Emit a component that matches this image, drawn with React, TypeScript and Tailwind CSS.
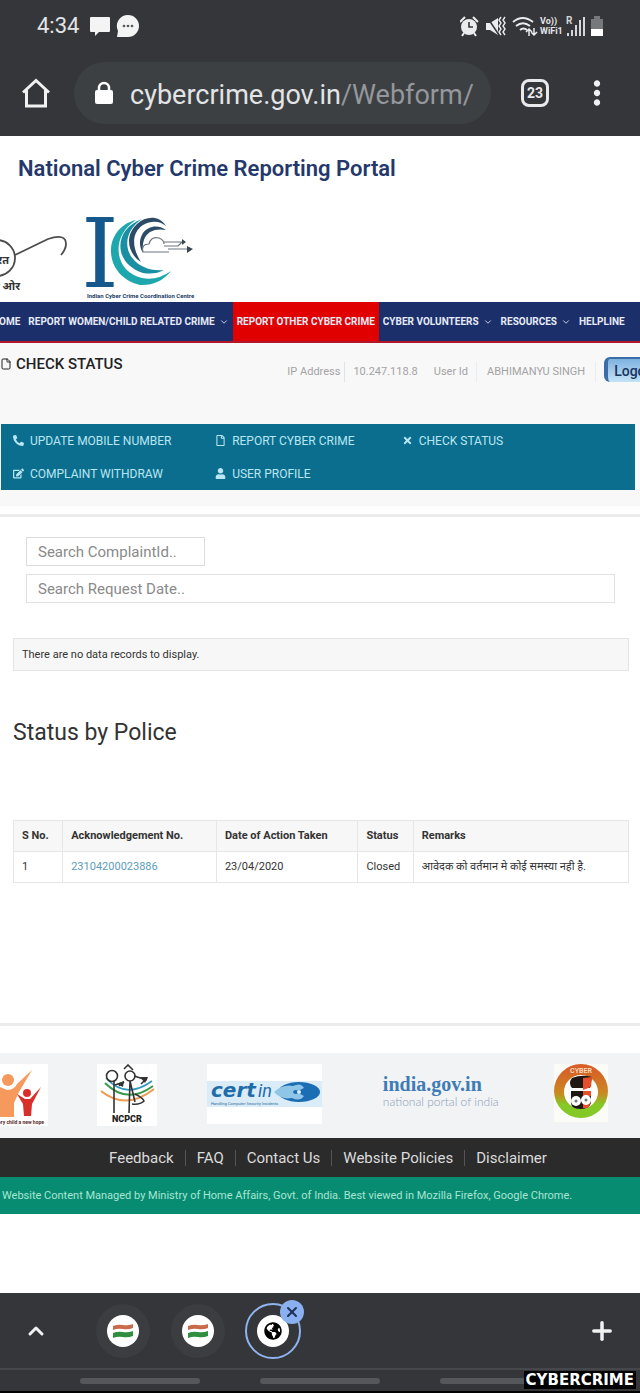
import { useState } from 'react';
import clsx from 'clsx';
import { ChevronDown, ChevronUp, File, Plus, X } from 'lucide-react';
import { FaEdit, FaGlobeAmericas, FaPhoneAlt, FaRegFile, FaTimes, FaUser } from 'react-icons/fa';
import { MdMoreVert } from 'react-icons/md';

const NAV_ITEMS = [
  { label: 'HOME' },
  { label: 'REPORT WOMEN/CHILD RELATED CRIME', menu: true },
  { label: 'REPORT OTHER CYBER CRIME', active: true },
  { label: 'CYBER VOLUNTEERS', menu: true },
  { label: 'RESOURCES', menu: true },
  { label: 'HELPLINE' },
];

const ACTIONS = [
  { label: 'UPDATE MOBILE NUMBER', icon: FaPhoneAlt },
  { label: 'REPORT CYBER CRIME', icon: FaRegFile },
  { label: 'CHECK STATUS', icon: FaTimes },
  { label: 'COMPLAINT WITHDRAW', icon: FaEdit },
  { label: 'USER PROFILE', icon: FaUser },
];

const RECORDS = [
  {
    sno: 1,
    ack: '23104200023886',
    date: '23/04/2020',
    status: 'Closed',
    remarks: 'आवेदक को वर्तमान मे कोई समस्या नही है.',
  },
];

const FOOTER_LINKS = ['Feedback', 'FAQ', 'Contact Us', 'Website Policies', 'Disclaimer'];

function StatusBar() {
  return (
    <div className="flex h-[52px] items-center pl-[37px] pr-9 text-[#e4e5e7]">
      <span className="text-[22px] leading-6">4:34</span>
      <svg className="ml-2.5 h-6 w-[50px]" viewBox="0 0 50 24" fill="#f4f4f5">
        <path d="M2 3h18a1 1 0 0 1 1 1v13a1 1 0 0 1-1 1H10l-4 4v-4H2a1 1 0 0 1-1-1V4a1 1 0 0 1 1-1z" />
        <path d="M39 1a11 11 0 1 1 0 22H28l1-6A11 11 0 0 1 39 1z" />
        <g fill="#55565a">
          <circle cx="35" cy="12" r="1.3" />
          <circle cx="39" cy="12" r="1.3" />
          <circle cx="43" cy="12" r="1.3" />
        </g>
      </svg>
      <div className="ml-auto flex items-center">
        {/* Alarm, vibrate and wifi */}
        <svg className="h-6 w-[80px]" viewBox="0 0 80 24" fill="none" stroke="#ececee" strokeWidth="2">
          <circle cx="9" cy="13" r="8" fill="#ececee" stroke="none" />
          <path d="M0 8l5-5M18 8l-5-5M4 19l-2 3M14 19l2 3" />
          <path d="M9 8v5h4" stroke="#35363a" strokeWidth="1.6" />
          <path d="M26 9h4l8-5v17l-8-5h-4z" fill="#ececee" stroke="none" />
          <path d="M27 3l12 18" stroke="#35363a" strokeWidth="1.5" />
          <path d="M41 3l-2 3 2 3-2 3 2 3-2 3 2 3M45 3l-2 3 2 3-2 3 2 3-2 3 2 3" strokeWidth="1.4" />
          <path d="M53 8q9.5-8 20 0M56 12q7-5.5 14 0M60 16q3.5-3 7 0" strokeWidth="2" />
          <path d="M69 22v-7M74 14v7M66 18l3-3 3 3M71 18l3 3 3-3" strokeWidth="1.5" />
        </svg>
        <div className="w-6 text-[9px] font-bold leading-[10px]">
          <div>Vo))</div>
          <div>WiFi1</div>
        </div>
        <svg className="ml-0.5 h-6 w-5" viewBox="0 0 20 24" fill="#d5d6d8">
          <text x="0" y="10" fontSize="10" fontWeight="700">R</text>
          <path d="M1 19h2v3H1zM5 16h2v6H5zM9 11h2v11H9zM13 6h2v16h-2zM17 3h2v19h-2z" />
        </svg>
        <svg className="ml-1 h-6 w-[14px]" viewBox="0 0 14 24">
          <path d="M4 2h6v3h3v17H1V5h3z" fill="#77787c" />
          <path d="M1 15h12v7H1z" fill="#fff" />
        </svg>
      </div>
    </div>
  );
}

function Toolbar() {
  return (
    <div className="flex items-center pb-3 pl-[22px] pr-6 pt-2.5">
      <button aria-label="Home" className="text-[#f1f1f2]">
        <svg className="h-[30px] w-7" viewBox="0 0 28 30" fill="none" stroke="currentColor" strokeWidth="3">
          <path d="M1 14.500L14 2.500l13 12M4.500 12v16h19V12" />
        </svg>
      </button>
      <div className="ml-6 flex h-[62px] min-w-0 flex-1 items-center rounded-full bg-[#3c4043] pl-5">
        <svg className="h-6 w-5 shrink-0" viewBox="0 0 20 24">
          <path d="M5 10V7a5 5 0 0 1 10 0v3" fill="none" stroke="#fff" strokeWidth="2.5" />
          <rect x="1" y="9" width="18" height="14" rx="2" fill="#fff" />
        </svg>
        <span className="ml-4 whitespace-nowrap pt-1 text-[27px] leading-8 text-[#e3e4e6]">
          cybercrime.gov.in<span className="text-[#94979b]">/Webform/</span>
        </span>
      </div>
      <button
        aria-label="Tabs"
        className="ml-[30px] h-7 w-7 rounded-lg border-[3px] border-[#e8e9ea] text-sm font-bold leading-[22px] text-[#e8e9ea]"
      >
        23
      </button>
      <button aria-label="More" className="ml-[29px] text-[#f1f1f2]">
        <MdMoreVert className="h-[38px] w-[38px]" />
      </button>
    </div>
  );
}

function HeaderLogos() {
  return (
    <svg className="h-[102px] w-[210px]" viewBox="0 0 210 102" fill="none">
      {/* Swachh Bharat spectacles */}
      <g stroke="#4c4c4c" strokeWidth="1.8">
        <circle cx="-3" cy="58" r="18" />
        <path d="M15 55L48 39q18-6 18 5 0 5-5 11M-3 40v-5" />
      </g>
      <g fill="#333" fontSize="11" fontWeight="700" textAnchor="end">
        <text x="9" y="64">भारत</text>
        <text x="20" y="90">की ओर</text>
      </g>
      <text x="81" y="87" fontSize="96" fontFamily="DejaVu Serif" fill="#15588c">I</text>
      <path d="M136 20C102 28 102 76 140 85q19 1 31-14-14 10-29 7C114 72 110 36 136 20z" fill="#1ea8ad" />
      <path d="M142 19C112 30 114 64 143 73q12 2 21-3-12 1-20-3C122 57 122 32 142 19z" fill="#1a8fa3" />
      <path d="M166 26c-7-11-20-10-29-2-13 12-9 30 4 38-9-14-10-29 2-37 9-5 17-4 23 1z" fill="#2c4b66" />
      <path d="M166 30c-8-6-18-4-23 3-5 8-3 15 0 20-1-10 1-17 7-21 5-3 11-3 16-2z" fill="#2c4b66" />
      <g stroke="#6b7780" strokeWidth="1.2">
        <path d="M143 52q-2-8 6-8 2-8 10-6 5 2 5 6M143 52h26M164 42h20M164 46h14l4-4M168 49h22" />
      </g>
      <path d="M182 39l4 3-4 3zM187 46l6 3-6 4z" fill="#3c4850" />
      <text x="87" y="98" fontSize="6" fontWeight="700" fill="#1c3c66">Indian Cyber Crime Coordination Centre</text>
    </svg>
  );
}

function MainNav() {
  return (
    <nav className="overflow-hidden border-b-2 border-[#b3162b] bg-[#1b2f6b]">
      <ul className="-ml-3 flex">
        {NAV_ITEMS.map((item) => (
          <li key={item.label} className={clsx('shrink-0', item.active && 'bg-[#e00000]')}>
            <a
              href="#"
              className="flex h-[39px] items-center gap-1 whitespace-nowrap px-1 text-[10px] font-bold text-[#e6ebf7]"
            >
              {item.label}
              {item.menu && <ChevronDown className="h-2.5 w-2.5" />}
            </a>
          </li>
        ))}
      </ul>
    </nav>
  );
}

function PageHead() {
  return (
    <section className="overflow-hidden bg-[#f8f8f9] pb-4 pt-2.5">
      <div className="flex items-start">
        <h2 className="flex items-center gap-1 whitespace-nowrap text-[15px] font-medium leading-[22px] text-[#222]">
          <File className="h-[14px] w-3" />
          CHECK STATUS
        </h2>
        <div className="-mr-6 ml-auto mt-1 flex h-[25px] items-end whitespace-nowrap text-[11px] leading-5 text-[#a3a3a3]">
          <span className="border-r border-[#e2e2e2] pr-1">IP Address</span>
          <span className="pl-2">10.247.118.8</span>
          <span className="pl-4">User Id</span>
          <span className="ml-2 border-x border-[#ececec] px-2.5">ABHIMANYU SINGH</span>
          <button className="ml-2 h-[25px] rounded-md border-l-4 border-t-2 border-[#3b6ea8] bg-linear-to-b from-[#7fb2e0] to-[#c3e3f5] px-1.5 text-sm font-medium text-[#17355e]">
            Logout
          </button>
        </div>
      </div>
      <ul className="ml-px mr-[5px] mt-[42px] grid grid-cols-[13fr_12fr_15fr] bg-[#0b6e8f] pl-3">
        {ACTIONS.map(({ label, icon: Icon }) => (
          <li key={label}>
            <a href="#" className="flex h-[33px] items-center gap-1.5 text-xs text-[#b9e6f2]">
              <Icon className="h-[11px] w-[11px]" />
              {label}
            </a>
          </li>
        ))}
      </ul>
    </section>
  );
}

function SearchForm() {
  const [complaintId, setComplaintId] = useState('');
  const [requestDate, setRequestDate] = useState('');

  return (
    <form className="flex flex-col items-start gap-2 pl-[26px] pr-[25px] pt-5">
      <input
        aria-label="Search ComplaintId"
        value={complaintId}
        onChange={(e) => setComplaintId(e.target.value)}
        placeholder="Search ComplaintId.."
        className="h-[29px] w-[179px] border border-[#dcdcdc] px-[11px] text-[15px] placeholder-[#8a8a8a]"
      />
      <input
        aria-label="Search Request Date"
        value={requestDate}
        onChange={(e) => setRequestDate(e.target.value)}
        placeholder="Search Request Date.."
        className="h-[29px] w-full border border-[#e2e2e2] px-[11px] text-[15px] placeholder-[#8a8a8a]"
      />
    </form>
  );
}

function StatusTable() {
  const cell = 'border border-[#e6e6e6] px-2 text-left';
  return (
    <table className="w-full table-fixed border-collapse text-[11px] text-[#333]">
      <thead>
        <tr className="h-[31px] bg-[#f7f7f7]">
          <th className={clsx(cell, 'w-[8%]')}>S No.</th>
          <th className={clsx(cell, 'w-[25%]')}>Acknowledgement No.</th>
          <th className={clsx(cell, 'w-[23%]')}>Date of Action Taken</th>
          <th className={clsx(cell, 'w-[9%]')}>Status</th>
          <th className={cell}>Remarks</th>
        </tr>
      </thead>
      <tbody>
        {RECORDS.map((row) => (
          <tr key={row.ack} className="h-[31px]">
            <td className={cell}>{row.sno}</td>
            <td className={cell}>
              <a href="#" className="text-[#5d9dba]">{row.ack}</a>
            </td>
            <td className={cell}>{row.date}</td>
            <td className={cell}>{row.status}</td>
            <td className={clsx(cell, 'whitespace-nowrap')}>{row.remarks}</td>
          </tr>
        ))}
      </tbody>
    </table>
  );
}

function PartnerLogos() {
  return (
    <div className="flex h-[85px] items-start justify-between bg-[#f1f3f5] pr-[26px] pt-[11px]">
      <svg className="h-[62px] w-12 bg-white" viewBox="0 0 48 62">
        <g fill="#f59a5c">
          <circle cx="8" cy="16" r="6" />
          <path d="M-2 22l9 4q7 0 10-6L32 6 19 28l-5 11v14H0z" />
        </g>
        <g fill="#d92f2b">
          <circle cx="27" cy="29" r="4" />
          <path d="M17 30l8 5h5l11-12-9 17-1 12h-7l-1-12z" />
        </g>
        <text x="44" y="60" fontSize="5" fontWeight="700" textAnchor="end" fill="#5a2c2c">Every child a new hope</text>
      </svg>
      <svg className="h-[62px] w-[60px] bg-white" viewBox="0 0 60 62" fill="none" strokeWidth="1.6">
        <path d="M9 14q20 22 46 3" stroke="#2b9ac0" />
        <path d="M8 19q22 22 48 3" stroke="#3a9a4c" strokeWidth="2" />
        <path d="M4 27q25 20 53-2" stroke="#ef9a4f" strokeWidth="2" />
        <g stroke="#333">
          <circle cx="15" cy="12" r="5.5" />
          <circle cx="33" cy="12" r="5" />
          <path d="M17 17v32M33 17l-1 32M33 17l5 21M27 5l4-4 5 5M18 21l9-3-5 4M37 12l13 4M44 20l6-6M38 30q8 4 9 7-4 4-12 3" />
        </g>
        <path d="M20 20l7-3-1 6zM43 13l8 0-3 6z" fill="#333" />
        <text x="15" y="58" fontSize="9" fontWeight="900" fill="#222">NCPCR</text>
      </svg>
      <svg className="h-[60px] w-[115px] bg-white" viewBox="0 0 115 60">
        <path d="M0 17h115v26H0z" fill="#d9ecf7" />
        <text x="4" y="33" fontSize="20" fontWeight="700" fontStyle="italic" fill="#1f6cab" fontFamily="DejaVu Sans">cert</text>
        <text x="51" y="33" fontSize="18" fontStyle="italic" fill="#1f6cab">in</text>
        <ellipse cx="92" cy="28" rx="21" ry="10" fill="#1b6db4" />
        <path d="M67 28q9-8 19-6 8-4 11 2-5 3-9 2-4 2 0 4 5-1 9 2-4 6-12 2-11 2-18-6z" fill="#8fc5e6" />
        <circle cx="92" cy="28" r="2" fill="#d9ecf7" />
        <text x="4" y="41" fontSize="4" fill="#2d6d9c">Handling Computer Security Incidents</text>
      </svg>
      <div className="pl-3 pt-2.5">
        <div className="w-[115px] whitespace-nowrap font-['Liberation_Serif'] text-xl font-bold leading-5 text-[#3f7cb5]">
          india.gov.in
        </div>
        <div className="whitespace-nowrap font-['Lato'] text-xs font-light leading-4 text-[#8ea0b5]">
          national portal of india
        </div>
      </div>
      <svg className="h-[58px] w-[66px]" viewBox="0 0 66 58">
        <defs>
          <linearGradient id="ring" x1="0" y1="0" x2="0" y2="1">
            <stop offset="0.1" stopColor="#d85f27" />
            <stop offset="0.55" stopColor="#c98a22" />
            <stop offset="0.75" stopColor="#84c926" />
          </linearGradient>
        </defs>
        <path d="M6 0h54v58H6z" fill="#fbfbf8" />
        <circle cx="33" cy="27" r="27" fill="url(#ring)" />
        <circle cx="33" cy="28" r="17" fill="#fff" />
        <path d="M24 14q10-4 20-1l-2 11H24q-4-5 0-10zM23 27h20v12q-2 6-10 6-10 0-10-6z" fill="#1f1714" />
        <path d="M35 14l9-1-1 10-8 3zM35 27h8v5h-8zM35 38h8l-3 6h-5z" fill="#e4502a" />
        <circle cx="28" cy="37" r="5" fill="#fff" />
        <circle cx="38" cy="36" r="5" fill="#fff" />
        <circle cx="28" cy="37" r="1.5" fill="#777" />
        <circle cx="38" cy="36" r="1.5" fill="#777" />
        <text x="33" y="9" fontSize="7" fontWeight="700" textAnchor="middle" fill="#f8d9b8">CYBER</text>
      </svg>
    </div>
  );
}

function FlagTab() {
  return (
    <button aria-label="Switch tab" className="flex h-[54px] w-[54px] items-center justify-center rounded-full bg-[#3c3d40]">
      <svg className="h-8 w-8" viewBox="0 0 32 32">
        <circle cx="16" cy="16" r="16" fill="#fff" />
        <path d="M6 11q5-2 10-1t10-1v4q-5 2-10 1T6 15z" fill="#c96a4a" />
        <path d="M6 18q5-2 10-1t10-1v5q-5 2-10 1T6 23z" fill="#2f8f3f" />
      </svg>
    </button>
  );
}

function BottomBar() {
  return (
    <div className="relative border-b-2 border-black bg-[#35363a]">
      <div className="flex h-[75px] items-center px-6 text-[#f1f1f2]">
        <button aria-label="Expand tabs">
          <ChevronUp className="h-6 w-6" strokeWidth={3} />
        </button>
        <div className="ml-12 flex gap-[21px]">
          <FlagTab />
          <FlagTab />
          <div className="relative flex h-[54px] w-[54px] items-center justify-center">
            <div className="flex h-14 w-14 shrink-0 items-center justify-center rounded-full border-2 border-[#8fb3ee]">
              <span className="flex h-8 w-8 items-center justify-center rounded-full bg-white">
                <FaGlobeAmericas className="h-[18px] w-[18px] text-black" />
              </span>
            </div>
            <button
              aria-label="Close tab"
              className="absolute -right-1 -top-1 flex h-6 w-6 items-center justify-center rounded-full bg-[#8ab0f0] text-[#1d2f52]"
            >
              <X className="h-4 w-4" strokeWidth={3} />
            </button>
          </div>
        </div>
        <button aria-label="New tab" className="ml-auto">
          <Plus className="h-7 w-7" strokeWidth={3} />
        </button>
      </div>
      <div className="flex h-[23px] items-center justify-center gap-[60px] border-t-2 border-[#46474b]">
        <span className="h-1.5 w-[120px] rounded-full bg-[#56575b]" />
        <span className="h-1.5 w-[120px] rounded-full bg-[#56575b]" />
        <span className="h-1.5 w-[120px] rounded-full bg-[#56575b]" />
      </div>
      <span className="absolute bottom-0.5 right-1 bg-black px-0.5 font-['DejaVu_Sans'] text-[15px] font-bold leading-[18px] text-white">
        CYBERCRIME
      </span>
    </div>
  );
}

export default function App() {
  return (
    <div className="w-full overflow-hidden bg-white font-['Roboto','Noto_Sans',sans-serif]">
      <header className="bg-[#35363a]">
        <StatusBar />
        <Toolbar />
      </header>
      <h1 className="flex h-16 items-center pl-[18px] text-[22px] font-semibold text-[#24386b]">
        National Cyber Crime Reporting Portal
      </h1>
      <HeaderLogos />
      <MainNav />
      <PageHead />
      <main className="mt-2 border-y-[3px] border-[#ececec] pb-[140px]">
        <SearchForm />
        <div className="pl-[13px] pr-[11px]">
          <p className="mt-[35px] h-[33px] border border-[#e4e4e4] bg-[#f7f7f7] px-2 text-[11px] leading-[31px] text-[#333]">
            There are no data records to display.
          </p>
          <h3 className="mb-[71px] mt-[46px] text-[23px] leading-8 text-[#333]">Status by Police</h3>
          <StatusTable />
        </div>
      </main>
      <footer className="mb-[79px] mt-[27px]">
        <PartnerLogos />
        <div className="flex h-[39px] items-center justify-center bg-[#2b2b2b] pl-4 text-[15px] text-[#dcdcdc]">
          {FOOTER_LINKS.map((label, i) => (
            <a key={label} href="#" className={clsx('px-[11px] leading-4', i > 0 && 'border-l border-[#555]')}>
              {label}
            </a>
          ))}
        </div>
        <p className="h-[37px] whitespace-nowrap bg-[#078c72] pl-0.5 text-[11px] leading-[37px] text-[#a9e5d3]">
          Website Content Managed by Ministry of Home Affairs, Govt. of India. Best viewed in Mozilla Firefox, Google Chrome.
        </p>
      </footer>
      <BottomBar />
    </div>
  );
}
